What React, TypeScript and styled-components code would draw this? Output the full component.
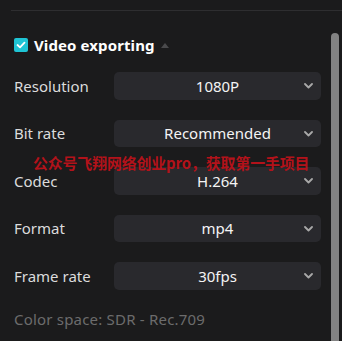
import React from 'react'
import styled, { createGlobalStyle } from 'styled-components'

const GlobalStyle = createGlobalStyle`
    html, body {
        margin: 0;
        padding: 0;
        background: #1b1b1c;
    }
    body {
        font-family: 'Noto Sans', 'Open Sans', sans-serif;
    }
`

const Page = styled.div`
    width: 342px;
    height: 341px;
    overflow: hidden;
    background: #1b1b1c;
    padding-top: 10px;
    box-sizing: border-box;
`

const Divider = styled.div`
    height: 1px;
    margin-left: 11px;
    background: #2e2e30;
`

const Body = styled.div`
    display: flex;
    height: 330px;
`

const Content = styled.div`
    width: 307px;
    padding-left: 14px;
    padding-top: 26px;
`

const Scrollbar = styled.div`
    width: 8px;
    margin-left: 10px;
    margin-top: 22px;
    background: #838383;
    border-radius: 4px 4px 0 0;
`

const Header = styled.div`
    display: flex;
    align-items: center;
    height: 16px;
    margin-bottom: 19px;
`

const Checkbox = styled.div`
    width: 14px;
    height: 14px;
    border-radius: 2px;
    background: #1fc4d4;
    display: flex;
    align-items: center;
    justify-content: center;
    margin-right: 6px;
`

const Title = styled.span`
    color: #ffffff;
    font-weight: 700;
    font-size: 15px;
    letter-spacing: 0.1px;
`

const Caret = styled.div`
    width: 0;
    height: 0;
    margin-left: 6px;
    margin-top: 1px;
    border-left: 4px solid transparent;
    border-right: 4px solid transparent;
    border-bottom: 5px solid #4a4a4c;
`

const Rows = styled.div`
    display: grid;
    grid-template-columns: 100px 207px;
    row-gap: 20px;
    align-items: center;
`

const Label = styled.div`
    color: #dcdcdc;
    font-size: 15px;
`

const Select = styled.div`
    position: relative;
    height: 27.5px;
    border-radius: 5px;
    background: #29292d;
    display: flex;
    align-items: center;
    justify-content: center;
    color: #f4f4f4;
    font-size: 15px;
`

const Chevron = styled.svg`
    position: absolute;
    right: 8px;
    top: 11px;
`

const Watermark = styled.div`
    position: absolute;
    left: 33px;
    top: 152px;
    color: #b3121a;
    font-size: 14.9px;
    font-weight: 700;
    font-family: 'Noto Sans CJK SC', 'Noto Sans', sans-serif;
    white-space: nowrap;
    letter-spacing: -0.1px;
    pointer-events: none;
`

const Note = styled.div`
    color: #6c6c6c;
    font-size: 15px;
    margin-top: 19px;
    letter-spacing: 0.2px;
`

const Wrapper = styled.div`
    position: relative;
`

const rows = [
    { label: 'Resolution', value: '1080P' },
    { label: 'Bit rate', value: 'Recommended' },
    { label: 'Codec', value: 'H.264' },
    { label: 'Format', value: 'mp4' },
    { label: 'Frame rate', value: '30fps' },
]

export default function App() {
    return (
        <Wrapper>
            <GlobalStyle />
            <Page>
                <Divider />
                <Body>
                    <Content>
                        <Header>
                            <Checkbox>
                                <svg width="10" height="8" viewBox="0 0 10 8">
                                    <path d="M1.5 4 L4 6.3 L8.5 1.7" fill="none" stroke="#fff" strokeWidth="1.8" strokeLinecap="round" strokeLinejoin="round" />
                                </svg>
                            </Checkbox>
                            <Title>Video exporting</Title>
                            <Caret />
                        </Header>
                        <Rows>
                            {rows.map((r) => (
                                <React.Fragment key={r.label}>
                                    <Label>{r.label}</Label>
                                    <Select>
                                        {r.value}
                                        <Chevron width="9" height="6" viewBox="0 0 9 6">
                                            <path d="M1 1 L4.5 4.5 L8 1" fill="none" stroke="#a8a8a8" strokeWidth="1.8" strokeLinecap="round" strokeLinejoin="round" />
                                        </Chevron>
                                    </Select>
                                </React.Fragment>
                            ))}
                        </Rows>
                        <Note>Color space: SDR - Rec.709</Note>
                    </Content>
                    <Scrollbar />
                </Body>
            </Page>
            <Watermark>公众号飞翔网络创业pro，获取第一手项目</Watermark>
        </Wrapper>
    )
}
